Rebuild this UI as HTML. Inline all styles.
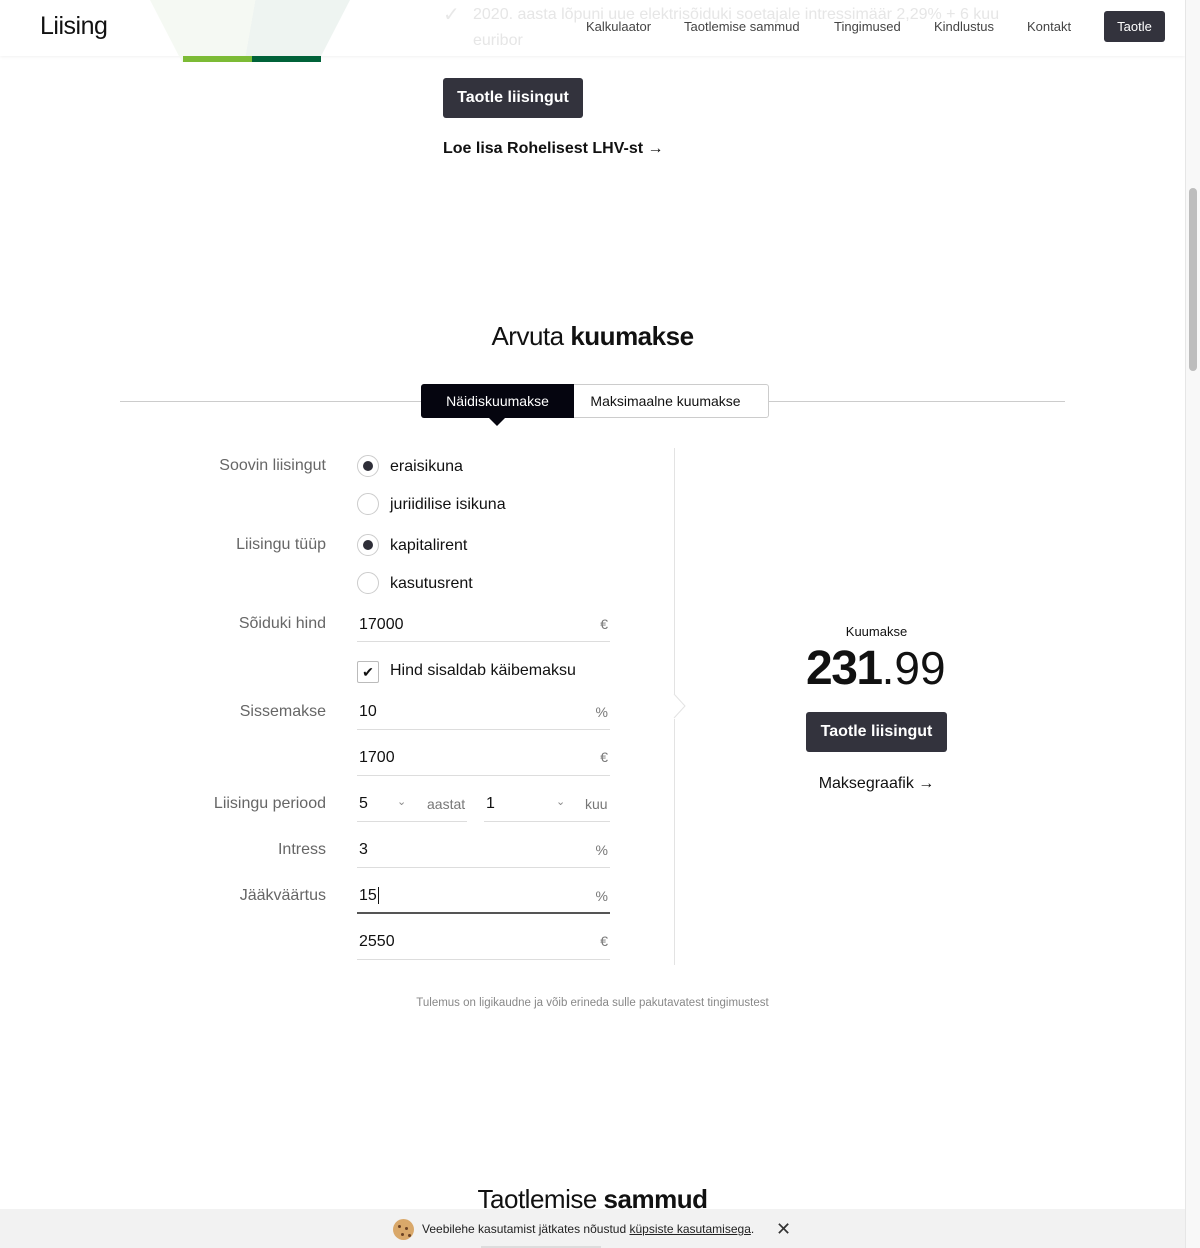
<!DOCTYPE html>
<html><head><meta charset="utf-8"><style>
*{margin:0;padding:0;box-sizing:border-box}
body{width:1200px;height:1248px;overflow:hidden;background:#fff;font-family:"Liberation Sans",sans-serif;color:#111;position:relative}
.a{position:absolute;white-space:nowrap}
.lbl{position:absolute;right:874px;font-size:16px;color:#666;white-space:nowrap}
.val{position:absolute;left:359px;font-size:16px;color:#111}
.line{position:absolute;left:357px;width:253px;height:1px;background:#ddd}
.unit{position:absolute;right:592px;font-size:14px;color:#777}
.radio{position:absolute;left:357px;width:22px;height:22px;border:1px solid #ccc;border-radius:50%}
.radio.on::after{content:"";position:absolute;left:5px;top:5px;width:10px;height:10px;border-radius:50%;background:#2e2e38}
.opt{position:absolute;left:390px;font-size:16px;color:#111}
.btn{position:absolute;background:#33333d;color:#fff;font-weight:bold;font-size:16px;border-radius:3px;text-align:center}
</style></head><body>
<!-- header -->
<div class="a" style="left:0;top:0;width:1185px;height:56px;background:#fff;box-shadow:0 1px 3px rgba(0,0,0,0.06)"></div>
<!-- green shape -->
<div class="a" style="left:150px;top:0;width:200px;height:62px;background:linear-gradient(100deg,#f5f9f3 50%,#eef4f1 50%);clip-path:polygon(0 0,100% 0,84% 100%,16% 100%)"></div>
<div class="a" style="left:183px;top:56px;width:69px;height:6px;background:#7cbb35"></div>
<div class="a" style="left:252px;top:56px;width:69px;height:6px;background:#006239"></div>
<div class="a" style="left:443px;top:2px;font-size:20px;color:#e8e8e8">✓</div>
<div class="a" style="left:473px;top:2px;font-size:16px;color:#e6e6e6;line-height:26px">2020. aasta lõpuni uue elektrisõiduki soetajale intressimäär 2,29% + 6 kuu<br>euribor</div>
<div class="a" style="left:40px;top:12px;font-size:25px;color:#111;letter-spacing:-0.5px">Liising</div>
<div class="a" style="left:586px;top:19px;font-size:13px;color:#444">Kalkulaator</div>
<div class="a" style="left:684px;top:19px;font-size:13px;color:#444">Taotlemise sammud</div>
<div class="a" style="left:834px;top:19px;font-size:13px;color:#444">Tingimused</div>
<div class="a" style="left:934px;top:19px;font-size:13px;color:#444">Kindlustus</div>
<div class="a" style="left:1027px;top:19px;font-size:13px;color:#444">Kontakt</div>
<div class="btn" style="left:1104px;top:11px;width:61px;height:31px;line-height:31px;font-size:13px;font-weight:normal">Taotle</div>
<!-- scrollbar -->
<div class="a" style="left:1185px;top:0;width:15px;height:1248px;background:#f8f8f8;border-left:1px solid #e6e6e6"></div>
<div class="a" style="left:1189px;top:188px;width:8px;height:183px;background:#bdbdbd;border-radius:4px"></div>

<div class="btn" style="left:443px;top:78px;width:140px;height:40px;line-height:40px">Taotle liisingut</div>
<div class="a" style="left:443px;top:140px;font-size:16px;font-weight:bold">Loe lisa Rohelisest LHV-st →</div>

<div class="a" style="left:0;width:1185px;top:321px;text-align:center;font-size:26px;letter-spacing:-0.5px"><span style="font-weight:300">Arvuta</span> <b>kuumakse</b></div>
<div class="a" style="left:120px;top:401px;width:945px;height:1px;background:#ccc"></div>
<div class="a" style="left:421px;top:384px;width:348px;height:34px;border:1px solid #ccc;border-radius:3px;background:#fff"></div>
<div class="a" style="left:421px;top:384px;width:153px;height:34px;background:#05050f;border-radius:3px 0 0 3px;color:#fff;font-size:14px;line-height:34px;text-align:center">Näidiskuumakse</div>
<div class="a" style="left:489px;top:418px;width:0;height:0;border-left:8px solid transparent;border-right:8px solid transparent;border-top:8px solid #05050f"></div>
<div class="a" style="left:568px;top:384px;width:195px;height:34px;color:#111;font-size:14px;line-height:34px;text-align:center">Maksimaalne kuumakse</div>

<div class="lbl" style="top:457px">Soovin liisingut</div>
<div class="radio on" style="top:455px"></div><div class="opt" style="top:458px">eraisikuna</div>
<div class="radio" style="top:493px"></div><div class="opt" style="top:496px">juriidilise isikuna</div>
<div class="lbl" style="top:536px">Liisingu tüüp</div>
<div class="radio on" style="top:534px"></div><div class="opt" style="top:537px">kapitalirent</div>
<div class="radio" style="top:572px"></div><div class="opt" style="top:575px">kasutusrent</div>

<div class="lbl" style="top:615px">Sõiduki hind</div>
<div class="val" style="top:616px">17000</div><div class="unit" style="top:616px">€</div><div class="line" style="top:641px"></div>
<div class="a" style="left:357px;top:661px;width:22px;height:22px;border:1px solid #bbb;border-radius:2px;font-size:14px;text-align:center;line-height:20px">✔</div>
<div class="opt" style="top:662px">Hind sisaldab käibemaksu</div>

<div class="lbl" style="top:703px">Sissemakse</div>
<div class="val" style="top:703px">10</div><div class="unit" style="top:704px">%</div><div class="line" style="top:729px"></div>
<div class="val" style="top:749px">1700</div><div class="unit" style="top:749px">€</div><div class="line" style="top:775px"></div>

<div class="lbl" style="top:795px">Liisingu periood</div>
<div class="val" style="top:795px">5</div>
<div class="a" style="left:397px;top:795px;font-size:11px;color:#888">⌄</div>
<div class="a" style="left:427px;top:796px;font-size:14px;color:#777">aastat</div>
<div class="a" style="left:357px;top:821px;width:110px;height:1px;background:#ddd"></div>
<div class="a" style="left:486px;top:795px;font-size:16px">1</div>
<div class="a" style="left:556px;top:795px;font-size:11px;color:#888">⌄</div>
<div class="a" style="left:585px;top:796px;font-size:14px;color:#777">kuu</div>
<div class="a" style="left:484px;top:821px;width:126px;height:1px;background:#ddd"></div>

<div class="lbl" style="top:841px">Intress</div>
<div class="val" style="top:841px">3</div><div class="unit" style="top:842px">%</div><div class="line" style="top:867px"></div>
<div class="lbl" style="top:887px">Jääkväärtus</div>
<div class="val" style="top:887px">15<span style="border-right:1px solid #111;margin-left:1px"></span></div><div class="unit" style="top:888px">%</div><div class="line" style="top:912px;height:2px;background:#555"></div>
<div class="val" style="top:933px">2550</div><div class="unit" style="top:933px">€</div><div class="line" style="top:959px"></div>

<!-- divider -->
<div class="a" style="left:674px;top:448px;width:1px;height:246px;background:#e3e3e3"></div>
<svg class="a" style="left:673px;top:693px" width="14" height="27"><polyline points="1,1 12,13 1,25" fill="none" stroke="#e3e3e3" stroke-width="1"/></svg>
<div class="a" style="left:674px;top:719px;width:1px;height:246px;background:#e3e3e3"></div>

<div class="a" style="left:806px;width:141px;top:624px;text-align:center;font-size:13px">Kuumakse</div>
<div class="a" style="left:806px;top:641px;font-size:48px;letter-spacing:-1.5px"><b>231</b><span style="font-weight:300;font-size:46px;letter-spacing:0">.99</span></div>
<div class="btn" style="left:806px;top:712px;width:141px;height:40px;line-height:40px">Taotle liisingut</div>
<div class="a" style="left:806px;width:141px;top:775px;text-align:center;font-size:16px">Maksegraafik →</div>

<div class="a" style="left:0;width:1185px;top:997px;text-align:center;font-size:11.5px;color:#888">Tulemus on ligikaudne ja võib erineda sulle pakutavatest tingimustest</div>

<div class="a" style="left:0;width:1185px;top:1184px;text-align:center;font-size:26px;letter-spacing:-0.5px"><span style="font-weight:300">Taotlemise</span> <b>sammud</b></div>
<!-- cookie bar -->
<div class="a" style="left:0;top:1209px;width:1185px;height:39px;background:#f2f2f2"></div>
<div class="a" style="left:481px;top:1246px;width:120px;height:2px;background:#ddd"></div>
<div class="a" style="left:393px;top:1219px;width:21px;height:21px;border-radius:50%;background:#d9a86a"></div>
<div class="a" style="left:398px;top:1225px;width:3px;height:3px;border-radius:50%;background:#6b4224;box-shadow:7px 2px #6b4224,3px 8px #6b4224,10px 9px #6b4224"></div>
<div class="a" style="left:422px;top:1222px;font-size:12px;color:#222">Veebilehe kasutamist jätkates nõustud <u>küpsiste kasutamisega</u>.</div>
<div class="a" style="left:776px;top:1219px;font-size:18px;color:#333;font-weight:300">✕</div>
</body></html>
